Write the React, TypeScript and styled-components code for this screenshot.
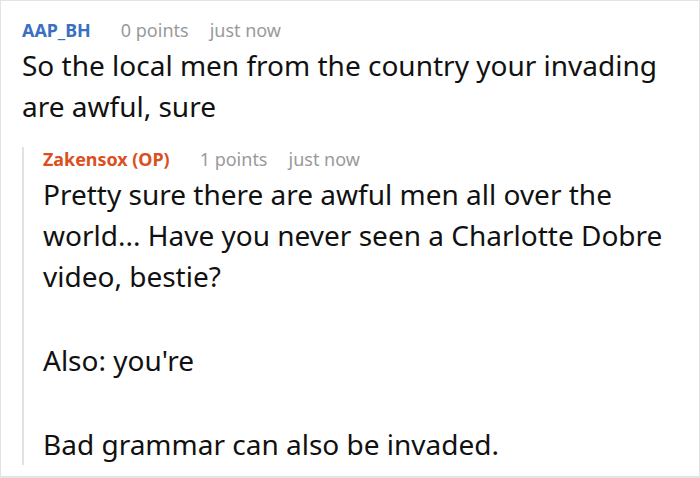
import React from 'react';
import styled, { createGlobalStyle } from 'styled-components';

const GlobalStyle = createGlobalStyle`
  html, body {
    margin: 0;
    padding: 0;
    background: #ffffff;
  }
  body {
    font-family: "Noto Sans", "Open Sans", sans-serif;
  }
`;

const Frame = styled.div`
  box-sizing: border-box;
  width: 700px;
  height: 478px;
  overflow: hidden;
  border: 1px solid #e3e3e3;
  border-bottom-width: 2px;
  padding: 17px 12px 0 21px;
  background: #fff;
`;

const Comment = styled.div`
  display: flex;
  flex-direction: column;
`;

const Reply = styled.div`
  display: flex;
  flex-direction: column;
  margin-top: 20px;
  border-left: 2px solid #e2e2e2;
  padding-left: 19px;
`;

const Meta = styled.div`
  display: flex;
  align-items: center;
  height: 24px;
  margin-bottom: 3px;
  font-size: 18px;
  line-height: 24px;
`;

const Author = styled.span<{ $op?: boolean }>`
  font-weight: 700;
  font-size: 17.9px;
  color: ${(p) => (p.$op ? '#d9501e' : '#3b6fc0')};
  margin-right: 30px;
`;

const MetaItem = styled.span`
  color: #9a9a9a;
  margin-right: 21px;
`;

const Body = styled.div`
  font-size: 28px;
  line-height: 41px;
  color: #111;
`;

const Para = styled.p`
  margin: 0 0 43px 0;
  &:last-child {
    margin-bottom: 0;
  }
`;

export default function App() {
  return (
    <>
      <GlobalStyle />
      <Frame>
        <Comment>
          <Meta>
            <Author>AAP_BH</Author>
            <MetaItem>0 points</MetaItem>
            <MetaItem>just now</MetaItem>
          </Meta>
          <Body>
            <Para>So the local men from the country your invading are awful, sure</Para>
          </Body>
          <Reply>
            <Meta>
              <Author $op>Zakensox (OP)</Author>
              <MetaItem>1 points</MetaItem>
              <MetaItem>just now</MetaItem>
            </Meta>
            <Body>
              <Para>
                Pretty sure there are awful men all over the world... Have you never seen a
                Charlotte Dobre video, bestie?
              </Para>
              <Para>Also: you're</Para>
              <Para>Bad grammar can also be invaded.</Para>
            </Body>
          </Reply>
        </Comment>
      </Frame>
    </>
  );
}
